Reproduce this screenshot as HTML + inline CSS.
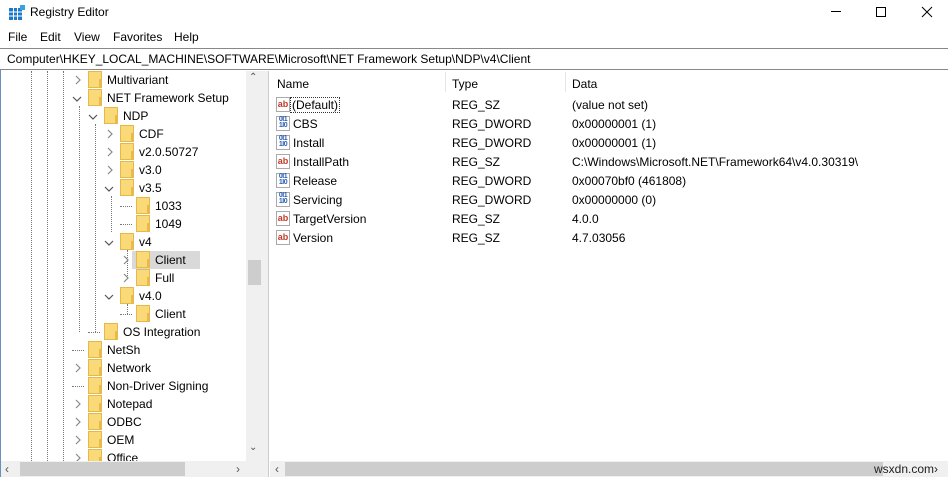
<!DOCTYPE html>
<html><head><meta charset="utf-8"><style>
*{margin:0;padding:0;box-sizing:border-box}
body{width:948px;height:477px;overflow:hidden;background:#fff;font-family:"Liberation Sans",sans-serif;font-size:12px;color:#000;position:relative}
.a{position:absolute;white-space:nowrap}
.fold{position:absolute;width:14px;height:17px;background:#f9d978;border:1px solid #e6b84a;border-top-width:1px}
.fold:after{content:"";position:absolute;right:-1px;bottom:-1px;width:3px;height:9px;background:#e9b94a}
.chev{position:absolute;font-size:11px;color:#8a8a8a}
.dv{position:absolute;width:0;border-left:1px dotted #777}
.dh{position:absolute;height:0;border-top:1px dotted #777}
.ic{position:absolute;width:14px;height:15px;font-size:9px;font-weight:bold;line-height:13px;text-align:center;border:1px solid #aaa;background:#fff}
</style></head><body>
<svg class="a" style="left:9px;top:5px" width="16" height="16"><rect x="0" y="3" width="13" height="12" fill="#1e78c8"/><g stroke="#fff" stroke-width="1"><line x1="0" y1="7" x2="13" y2="7"/><line x1="0" y1="11" x2="13" y2="11"/><line x1="4.5" y1="3" x2="4.5" y2="15"/><line x1="8.5" y1="3" x2="8.5" y2="15"/></g><rect x="11" y="0" width="5" height="5" fill="#3aa0e0"/></svg>
<div class="a" style="left:30px;top:5px;font-size:12px">Registry Editor</div>
<div class="a" style="left:831px;top:11px;width:10px;border-top:1px solid #000"></div>
<div class="a" style="left:876px;top:7px;width:10px;height:10px;border:1px solid #000"></div>
<svg class="a" style="left:921px;top:6px" width="12" height="12"><path d="M1 1L11 11M11 1L1 11" stroke="#000"/></svg>
<div class="a" style="left:8px;top:30px">File</div>
<div class="a" style="left:40px;top:30px">Edit</div>
<div class="a" style="left:74px;top:30px">View</div>
<div class="a" style="left:113px;top:30px">Favorites</div>
<div class="a" style="left:174px;top:30px">Help</div>
<div class="a" style="left:0;top:48px;width:948px;height:22px;border-top:1px solid #888;border-bottom:1px solid #888"></div>
<div class="a" style="left:7px;top:52px">Computer\HKEY_LOCAL_MACHINE\SOFTWARE\Microsoft\NET Framework Setup\NDP\v4\Client</div>
<div class="a" style="left:0;top:70px;width:1px;height:407px;background:#6a8fbf"></div>
<div class="a" style="left:246px;top:71px;width:17px;height:390px;background:#f0f0f0"></div>
<div class="a" style="left:248px;top:260px;width:13px;height:25px;background:#cdcdcd"></div>
<div class="a" style="left:249px;top:72px;font-size:10px;color:#555">&#8963;</div>
<div class="a" style="left:249px;top:442px;font-size:10px;color:#555">&#8964;</div>
<div class="a" style="left:263px;top:71px;width:6px;height:406px;background:#f0f0f0;border-right:1px solid #ccc"></div>
<div class="a" style="left:1px;top:461px;width:262px;height:16px;background:#f0f0f0"></div>
<div class="a" style="left:20px;top:462px;width:165px;height:14px;background:#cdcdcd"></div>
<div class="a" style="left:5px;top:462px;color:#555">&#8249;</div>
<div class="a" style="left:236px;top:462px;color:#555">&#8250;</div>
<div class="a" style="left:270px;top:461px;width:678px;height:16px;background:#f0f0f0"></div>
<div class="a" style="left:285px;top:462px;width:598px;height:14px;background:#cdcdcd"></div>
<div class="a" style="left:275px;top:462px;color:#555">&#8249;</div>
<div class="a" style="left:874px;top:462px;font-size:12px;color:#222">wsxdn.com&#8250;</div>
<div class="a" style="left:277px;top:77px">Name</div>
<div class="a" style="left:452px;top:77px">Type</div>
<div class="a" style="left:572px;top:77px">Data</div>
<div class="a" style="left:445px;top:72px;width:1px;height:20px;background:#e5e5e5"></div>
<div class="a" style="left:565px;top:72px;width:1px;height:20px;background:#e5e5e5"></div>
<div id="R"></div><div id="T"></div>
<script>
var rows=[["(Default)","REG_SZ","(value not set)",0],["CBS","REG_DWORD","0x00000001 (1)",1],["Install","REG_DWORD","0x00000001 (1)",1],["InstallPath","REG_SZ","C:\\Windows\\Microsoft.NET\\Framework64\\v4.0.30319\\",0],["Release","REG_DWORD","0x00070bf0 (461808)",1],["Servicing","REG_DWORD","0x00000000 (0)",1],["TargetVersion","REG_SZ","4.0.0",0],["Version","REG_SZ","4.7.03056",0]];
var h="";
rows.forEach(function(r,i){var y=95+i*19;
h+='<div class="ic" style="left:276px;top:'+(y+2)+'px;color:'+(r[3]?'#2a5fb0':'#c0392b')+';'+(r[3]?'font-size:7px;line-height:6px;letter-spacing:-0.5px':'')+'">'+(r[3]?'0I1<br>1I0':'ab')+'</div>';
h+='<div class="a" style="left:293px;top:'+(y+3)+'px;'+(i==0?'outline:1px dotted #333;padding:0 1px;left:291px':'')+'">'+r[0]+'</div>';
h+='<div class="a" style="left:452px;top:'+(y+3)+'px">'+r[1]+'</div>';
h+='<div class="a" style="left:572px;top:'+(y+3)+'px">'+r[2]+'</div>';});
document.getElementById("R").innerHTML=h;
var t=[["Multivariant",88,"r"],["NET Framework Setup",88,"d"],["NDP",104,"d"],["CDF",120,"r"],["v2.0.50727",120,"r"],["v3.0",120,"r"],["v3.5",120,"d"],["1033",136,""],["1049",136,""],["v4",120,"d"],["Client",136,"r",1],["Full",136,"r"],["v4.0",120,"d"],["Client",136,""],["OS Integration",104,""],["NetSh",88,""],["Network",88,"r"],["Non-Driver Signing",88,""],["Notepad",88,"r"],["ODBC",88,"r"],["OEM",88,"r"],["Office",88,"r"]];
h='';
[31,47,63].forEach(function(x){h+='<div class="dv" style="left:'+x+'px;top:71px;height:390px"></div>'});
h+='<div class="dv" style="left:79px;top:106px;height:226px"></div>';
h+='<div class="dv" style="left:111px;top:196px;height:36px"></div>';
h+='<div class="dv" style="left:95px;top:124px;height:208px"></div>';
h+='<div class="dv" style="left:127px;top:250px;height:28px"></div>';
h+='<div class="dv" style="left:127px;top:304px;height:10px"></div>';
t.forEach(function(r,i){var c=80+i*18,f=r[1];
if(r[3])h+='<div class="a" style="left:'+(f-4)+'px;top:'+(c-9)+'px;width:'+(r[0].length*7+26)+'px;height:18px;background:#d9d9d9"></div>';
if(r[2]=="r")h+='<svg class="a" style="left:'+(f-14)+'px;top:'+(c-5)+'px" width="8" height="10"><path d="M2 1L6 5L2 9" fill="none" stroke="#888" stroke-width="1.2"/></svg>';
else if(r[2]=="d")h+='<svg class="a" style="left:'+(f-16)+'px;top:'+(c-3)+'px" width="10" height="8"><path d="M1 2L5 6L9 2" fill="none" stroke="#555" stroke-width="1.2"/></svg>';
else h+='<div class="dh" style="left:'+(f-16)+'px;top:'+c+'px;width:12px"></div>';
h+='<div class="fold" style="left:'+f+'px;top:'+(c-9)+'px"></div>';
h+='<div class="a" style="left:'+(f+19)+'px;top:'+(c-7)+'px">'+r[0]+'</div>';});
document.getElementById("T").innerHTML='<div class="a" style="left:1px;top:71px;width:245px;height:390px;overflow:hidden">'+h.replace(/left:(\d+)px/g,function(m,a){return 'left:'+(a-1)+'px'}).replace(/top:(\d+)px/g,function(m,a){return 'top:'+(a-71)+'px'})+'</div>';
</script>
</body></html>
